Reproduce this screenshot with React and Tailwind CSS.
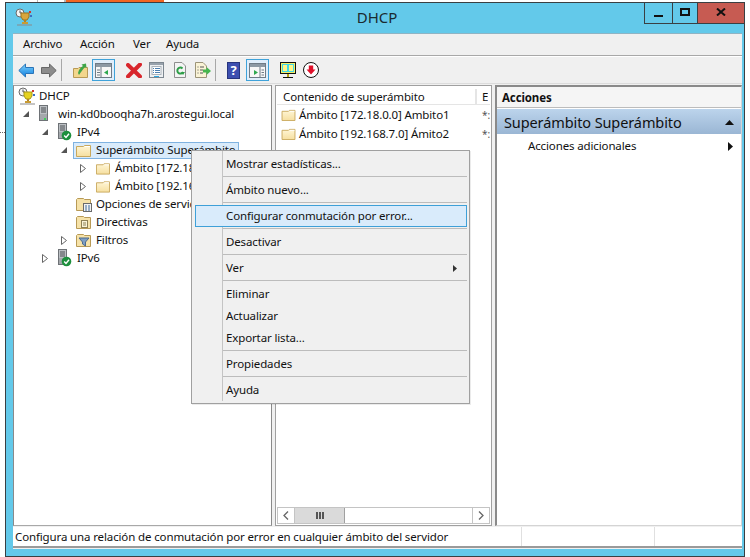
import React from "react";

const Folder = ({ w = 15, h = 13 }) => (
  <svg width={w} height={h} viewBox="0 0 15 13" className="shrink-0">
    <defs>
      <linearGradient id="fg" x1="0" y1="0" x2="0" y2="1">
        <stop offset="0" stopColor="#fff6d6" />
        <stop offset="1" stopColor="#f6dfa0" />
      </linearGradient>
    </defs>
    <path d="M.5 2.5V12.5H14.5V1.5H8.5L7.5 2.5Z" fill="url(#fg)" stroke="#c9a85c" />
    <path d="M9 2.5H14" stroke="#fff" strokeWidth="1" />
  </svg>
);

const Server = ({ check }) => (
  <svg width="15" height="18" viewBox="0 0 15 18" className="shrink-0">
    <rect x="1.5" y="0.5" width="8" height="15" fill="#bcc0c4" stroke="#6e7276" />
    <path d="M3 3H8M3 5H8M3 7H8" stroke="#4c5054" />
    <rect x="2" y="9" width="7" height="6" fill="#a4a8ac" />
    {check ? (
      <>
        <circle cx="9.5" cy="12.5" r="4.8" fill="#1d8f3d" />
        <path d="M7.2 12.5L9 14.5L12 10.8" stroke="#fff" strokeWidth="1.4" fill="none" />
      </>
    ) : (
      <rect x="6" y="13" width="2" height="2" fill="#3fd05a" />
    )}
  </svg>
);

const Trophy = ({ fade }) => (
  <svg width="18" height="19" viewBox="0 0 18 19" className="shrink-0">
    <circle cx="5" cy="5" r="4" fill="#f4f4f4" stroke="#6a6a6a" />
    <path d="M5 2.5V5H7" stroke="#555" fill="none" />
    <path d="M6 5H14V9L12 12H8L6 9Z" fill={fade ? "#d9a63c" : "#e6d21f"} stroke={fade ? "#9b7322" : "#a6971a"} />
    <rect x="14" y="3" width="2" height="2" fill="#d0352b" />
    <rect x="15" y="7" width="2" height="2" fill="#3a6fc4" />
    <rect x="9" y="12" width="2" height="3" fill="#b08528" />
    <rect x="7" y="14" width="6" height="2" fill="#c99b33" />
    <path d="M2 17H17" stroke="#8a8a8a" />
  </svg>
);

const FolderDoc = ({ kind }) => (
  <svg width="16" height="15" viewBox="0 0 16 15" className="shrink-0">
    <path d="M.5 2.5V13.5H14.5V2.5H8.5L7.5 1.5H1.5Z" fill="#f6e2a8" stroke="#b89a56" />
    {kind === "opts" && (
      <>
        <rect x="7.5" y="6.5" width="8" height="8" fill="#f2f2f2" stroke="#6a6a6a" />
        <path d="M9 9H11M12 9H14M9 11H11M12 11H14M9 13H11M12 13H14" stroke="#3c6a9c" />
      </>
    )}
    {kind === "dir" && (
      <>
        <rect x="5.5" y="5.5" width="6" height="7" fill="#faf3d6" stroke="#8f8154" />
        <path d="M7 8H10M7 10H10" stroke="#8f8154" />
      </>
    )}
    {kind === "filter" && <path d="M3 5H13L9.5 9V13L6.5 11V9Z" fill="#7d9ec4" stroke="#4d6a8c" />}
  </svg>
);

const Open = () => (
  <svg width="6" height="6" viewBox="0 0 6 6"><path d="M6 0V6H0Z" fill="#555" /></svg>
);
const Closed = () => (
  <svg width="6" height="9" viewBox="0 0 6 9"><path d="M.5.5L5.5 4.5L.5 8.5Z" fill="#fff" stroke="#666" /></svg>
);

const Row = ({ indent, arrow, icon, children, selected }) => (
  <div className={`flex h-[18px] items-center ${indent}`}>
    {arrow !== undefined && (
      <span className="flex w-[19px] shrink-0 items-center justify-center pr-[1px]">
        {arrow === "open" && <Open />}
        {arrow === "closed" && <Closed />}
      </span>
    )}
    {selected ? (
      <span className="ml-[-1px] flex h-[17px] w-[166px] items-center whitespace-nowrap border border-[#7fb2e0] bg-[#d9ebfb]">
        <span className="flex w-[19px] shrink-0 items-center justify-center">{icon}</span>
        <span className="pl-[3px]">{children}</span>
      </span>
    ) : (
      <>
        <span className="flex w-[19px] shrink-0 items-center justify-center">{icon}</span>
        <span className="whitespace-nowrap pl-[3px]">{children}</span>
      </>
    )}
  </div>
);

const Sep = () => <div className="relative z-10 my-[1px] ml-[31px] mr-[2px] h-[2px] border-t border-[#bcbcbc]" />;

const Item = ({ children, active, sub }) => (
  <div
    className={
      active
        ? "relative z-10 ml-[3px] mr-[2px] flex h-[22px] items-center border border-[#3ea0d8] bg-[#d9ebfb] pl-[30px]"
        : "relative z-10 flex h-[22px] items-center justify-between pl-[34px] pr-[12px]"
    }
  >
    <span>{children}</span>
    {sub && (
      <svg width="4" height="7" viewBox="0 0 4 7"><path d="M0 0L4 3.5L0 7Z" fill="#333" /></svg>
    )}
  </div>
);

const ToolBtn = ({ children }) => (
  <span className="flex h-[22px] w-[23px] items-center justify-center border border-[#3fa2d9] bg-[#e0eefb]">{children}</span>
);

const PaneGlyph = ({ right }) => (
  <svg width="17" height="15" viewBox="0 0 17 15">
    <rect x=".5" y=".5" width="16" height="14" fill="#f7f7f7" stroke="#6f7b86" />
    <rect x="1" y="1" width="15" height="3" fill="#8d99a4" />
    <path d={right ? "M11 4V14" : "M6 4V14"} stroke="#6f7b86" />
    {right ? (
      <>
        <path d="M5 7L9 9.5L5 12Z" fill="#2fa84f" />
        <path d="M12.5 7H15M12.5 9.5H15M12.5 12H15" stroke="#6f7b86" />
      </>
    ) : (
      <>
        <path d="M2 7H5M2 9.5H5M2 12H5" stroke="#6f7b86" />
        <path d="M13 7L9 9.5L13 12Z" fill="#2fa84f" />
      </>
    )}
  </svg>
);

const Arrow = ({ flip, gray }) => (
  <svg width="16" height="15" viewBox="0 0 16 15" className={flip ? "-scale-x-100" : ""}>
    <defs>
      <linearGradient id="ab" x1="0" y1="0" x2="0" y2="1">
        <stop offset="0" stopColor="#7fd2fb" />
        <stop offset="1" stopColor="#0f7fe0" />
      </linearGradient>
    </defs>
    <path d="M.8 7.5L7.5 1V4.5H15.5V10.5H7.5V14Z" fill={gray ? "#8c8c8c" : "url(#ab)"} stroke={gray ? "#666" : "#2a74b8"} />
  </svg>
);

export default function App() {
  return (
    <div className="relative h-[557px] w-[750px] overflow-hidden bg-white font-['Noto_Sans','Open_Sans',sans-serif] text-[11.5px] leading-none tracking-[-0.13px] text-[#111]">
      <div className="ml-[37px] flex h-[2px] w-[127px] border-l border-[#b8b8b8]">
        <div className="ml-[26px] w-[2px] bg-[#b8b8b8]" />
        <div className="flex-1 bg-[#f26522]" />
      </div>
      <div className="absolute left-0 top-[132px] h-[2px] w-[5px] border-t border-dotted border-[#666]" />

      <div className="relative ml-[5px] flex h-[555px] w-[740px] flex-col border border-[#3a3f42] bg-[#63c9ea]">
        {/* title bar */}
        <div className="grid h-[30px] shrink-0 grid-cols-[1fr_auto_1fr]">
          <div className="pl-[9px] pt-[5px]">
            <Trophy fade />
          </div>
          <div className="pl-[4px] pt-[7px] text-[15px] tracking-normal text-[#1a2a30]">DHCP</div>
          <div className="flex items-start justify-end">
            <div className="flex h-[21px] border-b border-l border-[#3a3f42]">
              <span className="flex w-[28px] items-center justify-center border-r border-[#3a3f42]">
                <span className="mt-[6px] h-[2px] w-[9px] bg-[#111]" />
              </span>
              <span className="flex w-[25px] items-center justify-center border-r border-[#3a3f42]">
                <span className="mb-[2px] h-[8px] w-[10px] border-2 border-[#111]" />
              </span>
              <span className="flex w-[46px] items-center justify-center bg-[#c75b52] pb-[3px]">
                <svg width="10" height="8" viewBox="0 0 10 8"><path d="M1 .5L9 7.5M9 .5L1 7.5" stroke="#111" strokeWidth="2" /></svg>
              </span>
            </div>
          </div>
        </div>

        {/* client */}
        <div className="ml-[7px] mr-[2px] flex flex-1 flex-col border-t border-[#8fb4c4] bg-[#f0f0f0]">
          {/* menu */}
          <div className="flex h-[22px] shrink-0 items-center border-b border-[#a8a8a8] pb-[1px] pl-[10px]">
            <span className="w-[57px]">Archivo</span>
            <span className="w-[53px]">Acción</span>
            <span className="w-[33px]">Ver</span>
            <span>Ayuda</span>
          </div>
          {/* toolbar */}
          <div className="flex h-[28px] shrink-0 items-center border-b border-t border-b-[#dcdcdc] border-t-white pl-[5px]">
            <Arrow />
            <span className="ml-[7px]"><Arrow flip gray /></span>
            <span className="ml-[4px] h-[22px] w-px bg-[#a8a8a8]" />
            <span className="ml-[11px]">
              <svg width="15" height="15" viewBox="0 0 15 15">
                <path d="M.5 5.5H5L6 4.5H14.5V14.5H.5Z" fill="#f3d68c" stroke="#b89a56" />
                <path d="M5 10C6 6 8 4 10 3L8.5 1.5L13 .5L13.5 5L12 4C10 6 8 9 6 12Z" fill="#3fa548" />
              </svg>
            </span>
            <span className="ml-[4px]"><ToolBtn><PaneGlyph /></ToolBtn></span>
            <span className="ml-[11px]">
              <svg width="16" height="15" viewBox="0 0 16 15">
                <path d="M2 2L14 13.5M14 1.5L2 13.5" stroke="#d8262c" strokeWidth="4" strokeLinecap="round" />
              </svg>
            </span>
            <span className="ml-[7px]">
              <svg width="15" height="16" viewBox="0 0 15 16">
                <rect x=".5" y=".5" width="14" height="15" fill="#eef0f2" stroke="#7d8790" />
                <rect x="1" y="1" width="13" height="2" fill="#98a2ac" />
                <rect x="3" y="4.5" width="9" height="8" fill="#fff" stroke="#aab2ba" />
                <path d="M4 6.5H5M6 6.5H11M4 8.5H5M6 8.5H11M4 10.5H5M6 10.5H11" stroke="#4c7fb0" />
                <rect x="5" y="14" width="5" height="1" fill="#2aa7e0" />
              </svg>
            </span>
            <span className="ml-[10px]">
              <svg width="12" height="16" viewBox="0 0 12 16">
                <path d="M.5.5H8L11.5 4V15.5H.5Z" fill="#f4f4f4" stroke="#8e8e8e" />
                <path d="M8.5 6.5A3 3 0 1 0 9 10" fill="none" stroke="#2e9e48" strokeWidth="2" />
                <path d="M7 10H11L9 13Z" fill="#2e9e48" />
              </svg>
            </span>
            <span className="ml-[9px]">
              <svg width="16" height="16" viewBox="0 0 16 16">
                <path d="M.5.5H8L11.5 4V15.5H.5Z" fill="#faf3d6" stroke="#9c9478" />
                <path d="M2.5 5H3.5M5 5H9M2.5 8H3.5M5 8H8M2.5 11H3.5M5 11H8" stroke="#555" />
                <path d="M8 7.5H11.5V5L16 9L11.5 13V10.5H8Z" fill="#46b64e" />
              </svg>
            </span>
            <span className="ml-[4px] h-[22px] w-px bg-[#a8a8a8]" />
            <span className="ml-[11px] flex h-[17px] w-[13px] items-center justify-center border border-[#27347e] bg-[#3d4fb0] text-[13px] font-bold text-white">?</span>
            <span className="ml-[6px]"><ToolBtn><PaneGlyph right /></ToolBtn></span>
            <span className="ml-[11px]">
              <svg width="16" height="17" viewBox="0 0 16 17">
                <rect x=".5" y=".5" width="15" height="11" fill="#f4f06a" stroke="#111" />
                <rect x="2" y="2" width="12" height="8" fill="#3fd8e8" />
                <path d="M3 3H7V9H3ZM9 3H13V9H9Z" fill="#fff68a" />
                <path d="M8 12V15" stroke="#b8a218" strokeWidth="2" />
                <path d="M3 15.5H13" stroke="#111" />
              </svg>
            </span>
            <span className="ml-[7px]">
              <svg width="16" height="16" viewBox="0 0 16 16">
                <circle cx="8" cy="8" r="7.5" fill="#fff" stroke="#111" />
                <path d="M5.8 3.5H10.2V7.5H12.5L8 12.5L3.5 7.5H5.8Z" fill="#e0102a" />
              </svg>
            </span>
          </div>

          {/* panes */}
          <div className="flex h-[442px] shrink-0 pt-[1px]">
            {/* tree */}
            <div className="w-[259px] shrink-0 border border-b-[#a8a8a8] border-l-[#8a8a8a] border-r-[#8a8a8a] border-t-[#a0a0a0] bg-white pt-[1px]">
              <Row indent="pl-[3px]" icon={<Trophy />}>DHCP</Row>
              <Row indent="pl-[3px]" arrow="open" icon={<Server />}>win-kd0booqha7h.arostegui.local</Row>
              <Row indent="pl-[22px]" arrow="open" icon={<Server check />}>IPv4</Row>
              <Row indent="pl-[41px]" arrow="open" icon={<Folder />} selected>Superámbito Superámbito</Row>
              <Row indent="pl-[60px]" arrow="closed" icon={<Folder w={14} h={13} />}>Ámbito [172.18.0.0] Ambito1</Row>
              <Row indent="pl-[60px]" arrow="closed" icon={<Folder w={14} h={13} />}>Ámbito [192.168.7.0] Ámito2</Row>
              <Row indent="pl-[41px]" arrow="" icon={<FolderDoc kind="opts" />}>Opciones de servidor</Row>
              <Row indent="pl-[41px]" arrow="" icon={<FolderDoc kind="dir" />}>Directivas</Row>
              <Row indent="pl-[41px]" arrow="closed" icon={<FolderDoc kind="filter" />}>Filtros</Row>
              <Row indent="pl-[22px]" arrow="closed" icon={<Server check />}>IPv6</Row>
            </div>

            {/* middle */}
            <div className="ml-[3px] flex w-[217px] shrink-0 flex-col border border-[#a0a0a0] bg-white p-[1px]">
              <div className="flex h-[18px] shrink-0 border-b border-t border-b-[#e5e5e5] border-t-white pt-[1px]">
                <div className="flex w-[200px] items-center border-r-2 border-[#e5e5e5] pl-[6px] pt-[1px]">Contenido de superámbito</div>
                <div className="flex items-center overflow-hidden pl-[5px] pt-[1px]">E</div>
              </div>
              <div className="flex flex-1 flex-col">
                {[
                  ["Ámbito [172.18.0.0] Ambito1"],
                  ["Ámbito [192.168.7.0] Ámito2"],
                ].map(([t]) => (
                  <div key={t} className="flex h-[19px] items-center pl-[4px]">
                    <Folder w={15} h={12} />
                    <span className="ml-[3px] w-[184px] whitespace-nowrap">{t}</span>
                    <span className="text-[10px] text-[#555]">*:</span>
                  </div>
                ))}
              </div>
              <div className="flex h-[17px] shrink-0 border border-[#c4c4c4]">
                <span className="flex w-[17px] items-center justify-center border-r border-[#c4c4c4]">
                  <svg width="6" height="9" viewBox="0 0 6 9"><path d="M5 .5L1 4.5L5 8.5" fill="none" stroke="#666" strokeWidth="1.3" /></svg>
                </span>
                <span className="flex w-[50px] items-center justify-center gap-[1px] border-r border-[#a0a0a0] bg-[#dadada]">
                  <i className="h-[7px] w-[2px] bg-[#555]" />
                  <i className="h-[7px] w-[2px] bg-[#555]" />
                  <i className="h-[7px] w-[2px] bg-[#555]" />
                </span>
                <span className="flex-1" />
                <span className="flex w-[17px] items-center justify-center border-l border-[#c4c4c4]">
                  <svg width="6" height="9" viewBox="0 0 6 9"><path d="M1 .5L5 4.5L1 8.5" fill="none" stroke="#666" strokeWidth="1.3" /></svg>
                </span>
              </div>
            </div>

            {/* actions */}
            <div className="ml-[3px] flex w-[247px] shrink-0 flex-col border-b border-l-2 border-r border-t-2 border-b-[#d4d4d4] border-l-[#8a8a8a] border-r-[#d4d4d4] border-t-[#8a8a8a] bg-white">
              <div className="flex h-[21px] shrink-0 items-center border-b border-[#bcbcbc] bg-[#f5f5f5] pl-[5px] pt-[1px] font-bold">Acciones</div>
              <div className="mt-[1px] flex h-[25px] shrink-0 items-center justify-between bg-gradient-to-b from-[#bcd4ec] to-[#9ab6d4] pl-[7px] pr-[7px] pt-[1px] text-[14.5px] tracking-[-0.1px]">
                <span>Superámbito Superámbito</span>
                <svg width="9" height="5" viewBox="0 0 9 5"><path d="M0 5L4.5 0L9 5Z" fill="#111" /></svg>
              </div>
              <div className="flex h-[24px] items-center justify-between pl-[31px] pr-[8px]">
                <span>Acciones adicionales</span>
                <svg width="5" height="9" viewBox="0 0 5 9"><path d="M0 0L5 4.5L0 9Z" fill="#111" /></svg>
              </div>
            </div>
          </div>

          {/* status */}
          <div className="mt-[1px] flex h-[21px] shrink-0 items-center border-b-2 border-[#9a9a9a] bg-white">
            <div className="w-[508px] pl-[2px]">Configura una relación de conmutación por error en cualquier ámbito del servidor</div>
            <div className="h-full w-[133px] border-l border-[#e0e0e0]" />
            <div className="h-full flex-1 border-l border-[#e0e0e0]" />
          </div>
        </div>
        <div className="h-[7px] shrink-0" />

        {/* context menu */}
        <div className="absolute left-[185px] top-[147px] h-[254px] w-[279px] border border-[#a0a0a0] bg-[#f0f0f0] pt-[2px] shadow-[1px_1px_0_rgba(0,0,0,0.08)]">
          <div className="absolute bottom-[2px] left-[30px] top-0 w-px bg-[#c4c4c4]" />
          <Item>Mostrar estadísticas...</Item>
          <Sep />
          <Item>Ámbito nuevo...</Item>
          <Sep />
          <Item active>Configurar conmutación por error...</Item>
          <Sep />
          <Item>Desactivar</Item>
          <Sep />
          <Item sub>Ver</Item>
          <Sep />
          <Item>Eliminar</Item>
          <Item>Actualizar</Item>
          <Item>Exportar lista...</Item>
          <Sep />
          <Item>Propiedades</Item>
          <Sep />
          <Item>Ayuda</Item>
        </div>
      </div>
    </div>
  );
}
